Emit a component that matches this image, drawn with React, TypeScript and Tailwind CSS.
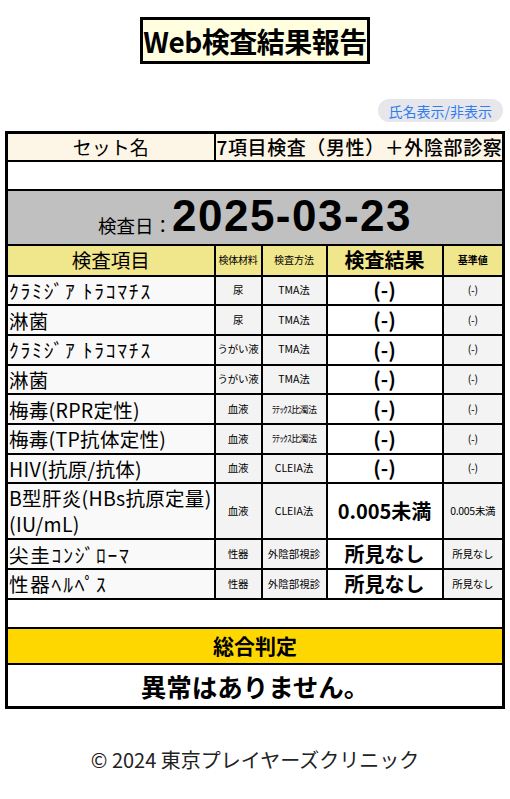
import React from 'react'

interface Item {
  name: string[]
  material: string
  method: string
  result: string
  reference: string
  tall?: boolean
  methodSmall?: boolean
  kana?: boolean
}

const ITEMS: Item[] = [
  { name: ['ｸﾗﾐｼﾞｱ ﾄﾗｺﾏﾁｽ'], material: '尿', method: 'TMA法', result: '(-)', reference: '(-)', kana: true },
  { name: ['淋菌'], material: '尿', method: 'TMA法', result: '(-)', reference: '(-)' },
  { name: ['ｸﾗﾐｼﾞｱ ﾄﾗｺﾏﾁｽ'], material: 'うがい液', method: 'TMA法', result: '(-)', reference: '(-)', kana: true },
  { name: ['淋菌'], material: 'うがい液', method: 'TMA法', result: '(-)', reference: '(-)' },
  { name: ['梅毒(RPR定性)'], material: '血液', method: 'ﾗﾃｯｸｽ比濁法', result: '(-)', reference: '(-)', methodSmall: true },
  { name: ['梅毒(TP抗体定性)'], material: '血液', method: 'ﾗﾃｯｸｽ比濁法', result: '(-)', reference: '(-)', methodSmall: true },
  { name: ['HIV(抗原/抗体)'], material: '血液', method: 'CLEIA法', result: '(-)', reference: '(-)' },
  { name: ['B型肝炎(HBs抗原定量)', '(IU/mL)'], material: '血液', method: 'CLEIA法', result: '0.005未満', reference: '0.005未満', tall: true },
  { name: ['尖圭ｺﾝｼﾞﾛｰﾏ'], material: '性器', method: '外陰部視診', result: '所見なし', reference: '所見なし', kana: true },
  { name: ['性器ﾍﾙﾍﾟｽ'], material: '性器', method: '外陰部視診', result: '所見なし', reference: '所見なし', kana: true },
]

const cell = 'border-2 border-black'

export default function App() {
  return (
    <div
      className="w-[510px] min-h-[799px] bg-white text-black"
      style={{ fontFamily: '"Noto Sans CJK JP", "Noto Sans", sans-serif' }}
    >
      {/* Title */}
      <div className="flex justify-center pt-[17px]">
        <div className="w-[230px] h-[47px] border-[3px] border-black bg-[#ffffe0] flex items-center justify-center">
          <h1 className="text-[28px] font-bold leading-none tracking-[-0.5px] whitespace-nowrap">Web検査結果報告</h1>
        </div>
      </div>

      {/* Toggle */}
      <div className="flex justify-end pr-[7px] mt-[35px]">
        <button className="h-[23px] px-[11px] rounded-full bg-[#e6e6eb] text-[#2f7ef0] text-[14px] leading-none">
          氏名表示/非表示
        </button>
      </div>

      {/* Result table */}
      <div className="px-[5px] mt-[9px]">
        <table className="w-full table-fixed border-collapse border-[3px] border-black">
          <colgroup>
            <col className="w-[208px]" />
            <col className="w-[47px]" />
            <col className="w-[65px]" />
            <col className="w-[116px]" />
            <col />
          </colgroup>
          <tbody>
            <tr className="h-[28px] bg-[#fdf5e6]">
              <td className={`${cell} text-center text-[19px] leading-none`}>セット名</td>
              <td colSpan={4} className={`${cell} text-[19px] leading-none font-medium whitespace-nowrap pl-[1px] tracking-[0.6px]`}>
                7項目検査（男性）＋外陰部診察
              </td>
            </tr>
            <tr className="h-[29px]">
              <td colSpan={5} className={cell} />
            </tr>
            <tr className="h-[55px] bg-[#c0c0c0]">
              <td colSpan={5} className={`${cell} text-center`}>
                <span className="text-[18.5px] align-[-2px]">検査日：</span>
                <span className="text-[44px] font-bold leading-none tracking-[1.5px]" style={{ fontFamily: '"Liberation Sans", "Noto Sans", sans-serif' }}>
                  2025-03-23
                </span>
              </td>
            </tr>
            <tr className="h-[31px] bg-[#f0e68c]">
              <td className={`${cell} text-center text-[19.5px] leading-none`}>検査項目</td>
              <td className={`${cell} text-center text-[10px] leading-none whitespace-nowrap tracking-[-0.3px]`}>検体材料</td>
              <td className={`${cell} text-center text-[10px] leading-none`}>検査方法</td>
              <td className={`${cell} text-center text-[20px] font-bold leading-none`}>検査結果</td>
              <td className={`${cell} text-center text-[10px] font-bold leading-none`}>基準値</td>
            </tr>
            {ITEMS.map((it, i) => (
              <tr key={i} className={it.tall ? 'h-[56px]' : 'h-[29.7px]'}>
                <td className={`${cell} bg-[#f9f9f9] text-[19.5px] whitespace-nowrap pl-[1px] ${it.kana ? 'tracking-[1.8px]' : 'tracking-[0.3px]'}`}>
                  {it.name.map(line => (
                    <div key={line} className={it.tall ? 'leading-[26.5px]' : 'leading-[25px]'}>{line}</div>
                  ))}
                </td>
                <td className={`${cell} bg-[#f3f3f3] text-center text-[10.5px] leading-none whitespace-nowrap tracking-[-0.3px]`}>{it.material}</td>
                <td className={`${cell} bg-[#f3f3f3] text-center leading-none whitespace-nowrap ${it.methodSmall ? 'text-[9px] tracking-[-0.6px]' : 'text-[10.5px]'}`}>{it.method}</td>
                <td className={`${cell} bg-white text-center text-[20px] font-bold leading-none whitespace-nowrap`}>{it.result}</td>
                <td className={`${cell} bg-[#f3f3f3] text-center text-[10.5px] leading-none whitespace-nowrap tracking-[-0.3px]`}>{it.reference}</td>
              </tr>
            ))}
            <tr className="h-[29px]">
              <td colSpan={5} className={cell} />
            </tr>
            <tr className="h-[36px] bg-[#ffd700]">
              <td colSpan={5} className={`${cell} text-center text-[21px] font-bold leading-none`}>総合判定</td>
            </tr>
            <tr className="h-[44px]">
              <td colSpan={5} className={`${cell} text-center text-[25.5px] font-bold leading-none`}>異常はありません。</td>
            </tr>
          </tbody>
        </table>
      </div>

      {/* Footer */}
      <footer className="mt-[36px] text-center text-[20px] text-[#222]">
        © 2024 東京プレイヤーズクリニック
      </footer>
    </div>
  )
}
